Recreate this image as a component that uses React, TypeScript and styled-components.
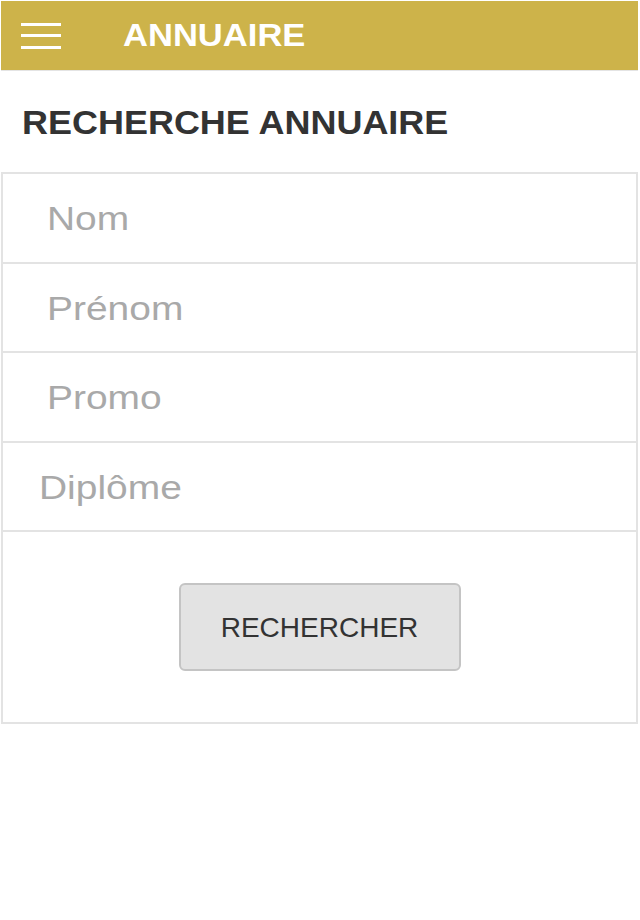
import React from 'react'
import styled, { createGlobalStyle } from 'styled-components'

const GlobalStyle = createGlobalStyle`
  html, body {
    margin: 0;
    padding: 0;
    background: #ffffff;
    font-family: "Liberation Sans", Arial, sans-serif;
  }
`

const Page = styled.div`
  width: 640px;
  min-height: 920px;
  padding: 1px 2px 0 1px;
  box-sizing: border-box;
`

const TopBar = styled.header`
  height: 69px;
  background: #cdb34a;
  display: flex;
  align-items: center;
  border-bottom: 1px solid #e4e4e4;
`

const Burger = styled.button`
  width: 42px;
  height: 26px;
  margin-left: 20px;
  padding: 0;
  border: none;
  background: transparent;
  display: flex;
  flex-direction: column;
  justify-content: space-between;
  cursor: pointer;
`

const BurgerLine = styled.span`
  display: block;
  width: 40px;
  height: 3px;
  background: #ffffff;
`

// the capture is a little stretched sideways, so the text is widened to match
const Wide = styled.span<{ $x: number }>`
  display: inline-block;
  transform: scaleX(${(p) => p.$x});
  transform-origin: left center;
`

const AppTitle = styled.h1`
  margin: 0 0 0 60px;
  font-size: 32px;
  font-weight: bold;
  color: #ffffff;
`

const Heading = styled.h2`
  margin: 0;
  padding: 33px 0 0 21px;
  height: 70px;
  box-sizing: border-box;
  font-size: 33px;
  font-weight: bold;
  color: #333333;
`

const Form = styled.form`
  margin-top: 31px;
  border: 2px solid #e3e3e3;
`

const Row = styled.div`
  height: 87.6px;
  border-bottom: 2px solid #e3e3e3;
  display: flex;
  align-items: center;
  overflow: hidden;
`

const STRETCH = 1.18

const Field = styled.input<{ $inset: number }>`
  width: ${100 / STRETCH}%;
  height: 100%;
  border: none;
  outline: none;
  background: transparent;
  box-sizing: border-box;
  padding: 3px 0 0 ${(p) => p.$inset / STRETCH}px;
  font-family: "Liberation Sans", Arial, sans-serif;
  font-size: 33px;
  color: #333333;
  transform: scaleX(${STRETCH});
  transform-origin: left center;

  &::placeholder {
    color: #a9a9a9;
  }
`

const ActionArea = styled.div`
  height: 190px;
  display: flex;
  align-items: center;
  justify-content: center;
`

const SearchButton = styled.button`
  width: 282px;
  height: 88px;
  background: #e3e3e3;
  border: 2px solid #c4c4c4;
  border-radius: 6px;
  padding-top: 3px;
  font-family: "Liberation Sans", Arial, sans-serif;
  font-size: 28px;
  color: #333333;
  cursor: pointer;
`

const fields = [
  { name: 'nom', label: 'Nom', inset: 44 },
  { name: 'prenom', label: 'Prénom', inset: 44 },
  { name: 'promo', label: 'Promo', inset: 44 },
  { name: 'diplome', label: 'Diplôme', inset: 36 },
]

export default function App() {
  return (
    <>
      <GlobalStyle />
      <Page>
        <TopBar>
          <Burger type="button" aria-label="Menu">
            <BurgerLine />
            <BurgerLine />
            <BurgerLine />
          </Burger>
          <AppTitle>
            <Wide $x={1.08}>ANNUAIRE</Wide>
          </AppTitle>
        </TopBar>
        <Heading>
          <Wide $x={1.09}>RECHERCHE ANNUAIRE</Wide>
        </Heading>
        <Form onSubmit={(e) => e.preventDefault()}>
          {fields.map((f) => (
            <Row key={f.name}>
              <Field name={f.name} placeholder={f.label} $inset={f.inset} />
            </Row>
          ))}
          <ActionArea>
            <SearchButton type="submit">RECHERCHER</SearchButton>
          </ActionArea>
        </Form>
      </Page>
    </>
  )
}
